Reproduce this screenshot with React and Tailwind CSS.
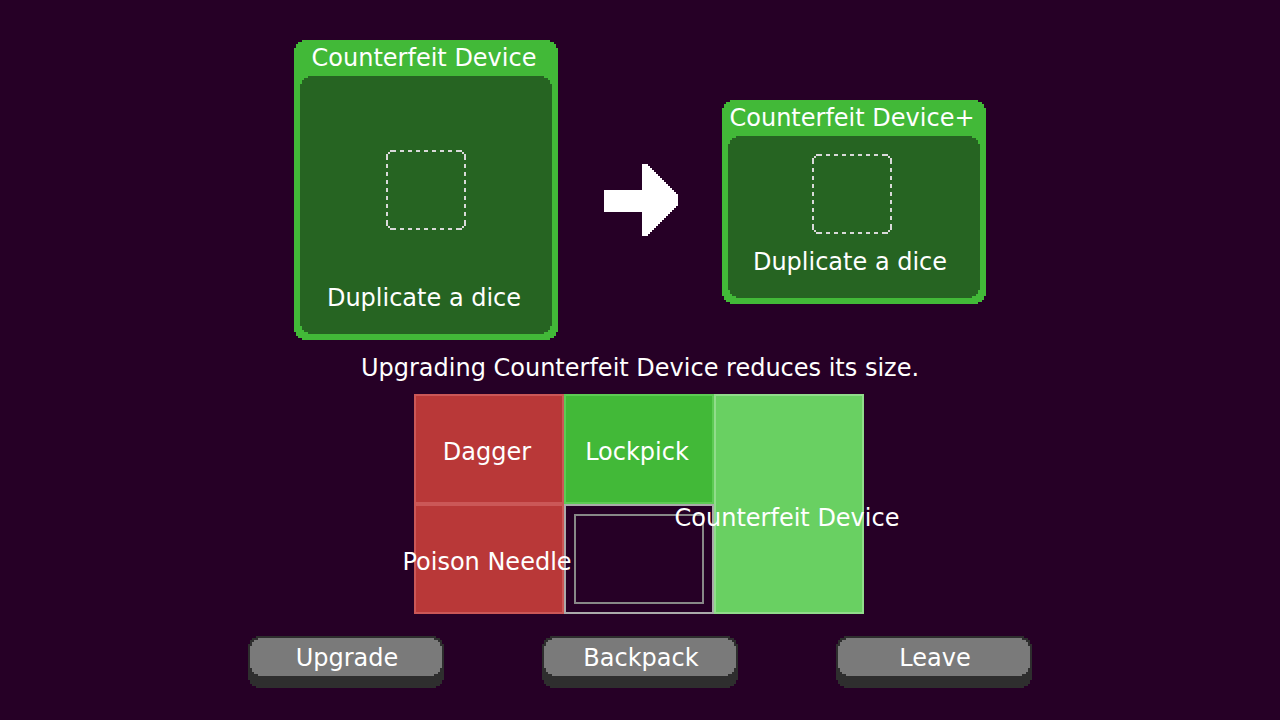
const PIXEL_CORNERS =
  "[clip-path:polygon(0_8px,2px_8px,2px_4px,4px_4px,4px_2px,8px_2px,8px_0,calc(100%-8px)_0,calc(100%-8px)_2px,calc(100%-4px)_2px,calc(100%-4px)_4px,calc(100%-2px)_4px,calc(100%-2px)_8px,100%_8px,100%_calc(100%-8px),calc(100%-2px)_calc(100%-8px),calc(100%-2px)_calc(100%-4px),calc(100%-4px)_calc(100%-4px),calc(100%-4px)_calc(100%-2px),calc(100%-8px)_calc(100%-2px),calc(100%-8px)_100%,8px_100%,8px_calc(100%-2px),4px_calc(100%-2px),4px_calc(100%-4px),2px_calc(100%-4px),2px_calc(100%-8px),0_calc(100%-8px))]";

function DiceSlot() {
  return (
    <svg
      className="size-20 shrink-0"
      viewBox="0 0 80 80"
      shapeRendering="crispEdges"
      aria-hidden="true"
    >
      {[0, 90, 180, 270].map((angle) => (
        <g key={angle} transform={`rotate(${angle} 40 40)`} fill="#d9d9d9">
          <path d="M4 0h6v2H4zM70 0h6v2h-6zM2 2h2v2H2z" />
          <path d="M14 1H66" stroke="#d9d9d9" strokeWidth="2" strokeDasharray="4 4" />
        </g>
      ))}
    </svg>
  );
}

// The arrow head is a staircase of 2px rows that widens toward the middle.
const arrowHead = Array.from({ length: 36 }, (_, row) => {
  const right = 46 + 2 * Math.min(row, 35 - row, 15);
  return `M40 ${row * 2}H${right}v2H40z`;
}).join("");

function Arrow() {
  return (
    <svg
      className="mt-31 h-18 w-19 shrink-0"
      viewBox="0 0 76 72"
      fill="#fff"
      shapeRendering="crispEdges"
      role="img"
      aria-label="becomes"
    >
      <path d={`M2 26H40V48H2z${arrowHead}`} />
    </svg>
  );
}

function EquipmentCard({ name, description, compact }) {
  return (
    <article
      className={`w-66 shrink-0 bg-[#42b938] px-1.5 pb-1.5 ${PIXEL_CORNERS} ${compact ? "mt-15" : ""}`}
    >
      <h2 className="pr-1 text-center leading-9 whitespace-nowrap">{name}</h2>
      <div
        className={`flex flex-col items-center bg-[#266422] pb-5 ${PIXEL_CORNERS} ${
          compact ? "gap-3 pt-4.5 pr-1" : "gap-13 pt-18.5"
        }`}
      >
        <DiceSlot />
        <p className="pr-1 leading-8 whitespace-nowrap">{description}</p>
      </div>
    </article>
  );
}

function Slot({ name, className }) {
  return (
    <li className={`flex items-center justify-center border-2 ${className}`}>
      <span className="relative z-10 pr-1 leading-8 whitespace-nowrap">{name}</span>
    </li>
  );
}

function GameButton({ children }) {
  return (
    <button
      type="button"
      className={`w-49 cursor-pointer bg-[#2e2e2e] px-0.5 pt-0.5 pb-3 ${PIXEL_CORNERS}`}
    >
      <span className={`block bg-[#7a7a7a] pt-1 pb-0.5 pl-0.5 leading-8 ${PIXEL_CORNERS}`}>
        {children}
      </span>
    </button>
  );
}

export default function App() {
  return (
    <main className="flex min-h-screen flex-col items-center bg-[#260026] px-4 pt-10 pb-8 font-['DejaVu_Sans',sans-serif] text-2xl text-white">
      <section className="flex w-full max-w-173 items-start justify-between" aria-label="Upgrade preview">
        <EquipmentCard name="Counterfeit Device" description="Duplicate a dice" />
        <Arrow />
        <EquipmentCard name="Counterfeit Device+" description="Duplicate a dice" compact />
      </section>

      <p className="mt-3 text-center leading-8">Upgrading Counterfeit Device reduces its size.</p>

      <div className="mt-2.5 w-full max-w-113 pr-0.5">
        <ul className="grid auto-rows-[110px] grid-cols-3" aria-label="Equipment">
          <Slot name="Dagger" className="border-[#cb5757] bg-[#b93838] pt-1.5" />
          <Slot name="Lockpick" className="border-[#5dcb54] bg-[#42b938] pt-1.5" />
          <Slot
            name="Counterfeit Device"
            className="row-span-2 border-[#91dc8b] bg-[#69d062] pt-7"
          />
          <Slot name="Poison Needle" className="border-[#cb5757] bg-[#b93838] pt-1.5" />
          <li className="border-2 border-[#aaaaaa] p-2" aria-label="Empty slot">
            <div className="h-full border-2 border-[#888888]" />
          </li>
        </ul>
      </div>

      <nav className="mt-5.5 flex w-full max-w-196 justify-between" aria-label="Actions">
        <GameButton>Upgrade</GameButton>
        <GameButton>Backpack</GameButton>
        <GameButton>Leave</GameButton>
      </nav>
    </main>
  );
}
